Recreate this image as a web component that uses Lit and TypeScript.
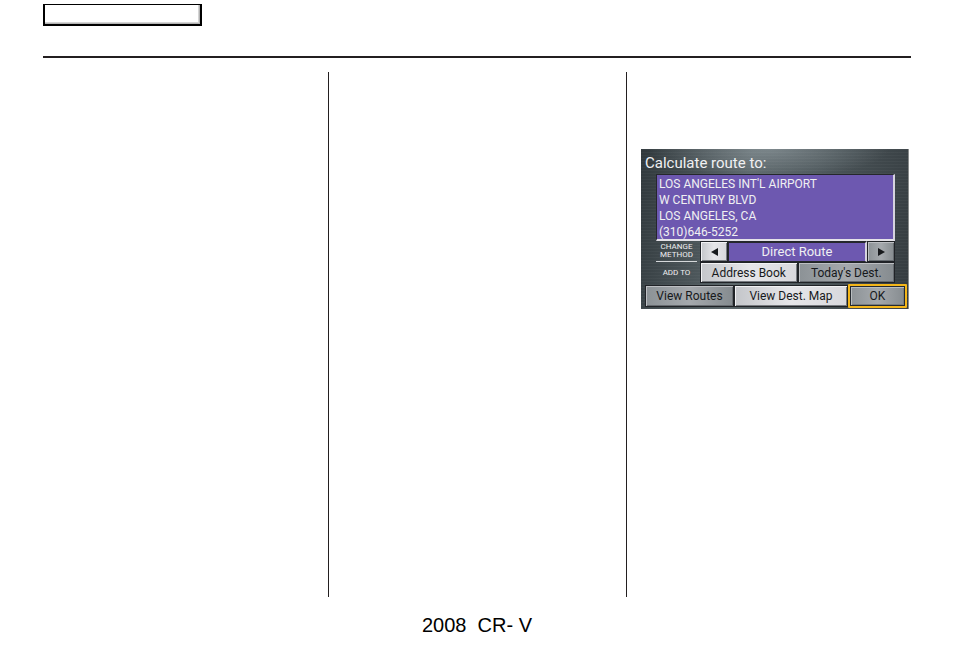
import { LitElement, html, css, svg } from 'lit';
import { customElement, property } from 'lit/decorators.js';

@customElement('route-screen')
export class RouteScreen extends LitElement {
  static styles = css`
    :host {
      display: block;
      box-sizing: border-box;
      padding: 4px 1px 1px 4px;
      border-right: 1px solid #8a8d8d;
      background:
        repeating-linear-gradient(0deg, rgb(255 255 255 / 3%) 0 1px, transparent 1px 3px),
        radial-gradient(ellipse 45% 18% at 48% 0, rgb(190 200 205 / 35%), transparent),
        linear-gradient(100deg, #30383c 0%, #596468 38%, #4c565a 62%, #343b3f 100%);
      color: #f0f0f2;
      font-family: Roboto, 'Liberation Sans', sans-serif;
      font-size: 13px;
    }

    h1 {
      margin: 0;
      font-size: 15px;
      line-height: 21px;
      font-weight: 400;
    }

    .panel {
      margin: 0 12px 0 11px;
    }

    .address {
      box-sizing: border-box;
      height: 67px;
      padding: 1px 2px;
      border: 1px solid #25272c;
      border-right: 2px solid #d6d3df;
      border-bottom: 2px solid #e4e2e8;
      background: #6d58b0;
      font-size: 12px;
      font-style: normal;
      line-height: 16px;
      white-space: nowrap;
    }

    .line {
      display: block;
    }

    .options {
      display: grid;
      grid-template-columns: 41px 1fr;
      column-gap: 3px;
    }

    .label {
      display: flex;
      align-items: center;
      justify-content: center;
      text-align: center;
      font-size: 8px;
      line-height: 8px;
    }

    .label--ruled {
      border-bottom: 1px solid #d5d8da;
    }

    .method {
      display: grid;
      grid-template-columns: 28px 1fr 28px;
      height: 21px;
    }

    .value {
      display: block;
      border: 1px solid #25272c;
      border-top-width: 2px;
      border-right: 2px solid #d6d3df;
      background: #6d58b0;
      line-height: 18px;
      text-align: center;
    }

    .targets {
      display: grid;
      grid-template-columns: 1fr 1fr;
      height: 21px;
    }

    .key {
      display: flex;
      align-items: center;
      justify-content: center;
      box-sizing: border-box;
      min-width: 0;
      padding: 0;
      border: 1px solid #202327;
      background: linear-gradient(90deg, #c4c6ca, #e6e6e9 50%, #d8d8dc);
      box-shadow: inset 1px 1px #f2f2f4, inset -1px -1px #777b80;
      color: #17191c;
      font: inherit;
      font-size: 12px;
      white-space: nowrap;
    }

    .key--dim {
      background: linear-gradient(90deg, #8c9296, #a5a9ad 50%, #858b8f);
      box-shadow: inset 1px 1px #bdbfc3, inset -1px -1px #666b70;
    }

    .key--selected {
      border: 2px solid #f4b61a;
      border-radius: 1px;
      box-shadow: inset 0 0 0 1px #252a30, inset 2px 2px #b9bec1, inset -2px -2px #777d80;
    }

    .key svg {
      width: 7px;
      height: 8px;
      fill: currentColor;
    }

    .actions {
      display: grid;
      grid-template-columns: 89fr 114fr 59fr;
      height: 24px;
      margin-top: 1px;
    }

    .actions .key:not(.key--selected) {
      height: 22px;
      align-self: center;
    }
  `;

  @property({ type: Array }) address: string[] = [
    "LOS ANGELES INT'L AIRPORT",
    'W CENTURY BLVD',
    'LOS ANGELES, CA',
    '(310)646-5252',
  ];
  @property() method = 'Direct Route';

  private _arrow(path: string) {
    return html`<svg viewBox="0 0 7 8" aria-hidden="true">${svg`<path d=${path} />`}</svg>`;
  }

  render() {
    return html`
      <h1>Calculate route to:</h1>
      <div class="panel">
        <address class="address">
          ${this.address.map((line) => html`<span class="line">${line}</span>`)}
        </address>
        <div class="options">
          <div class="label label--ruled" id="method">CHANGE<br />METHOD</div>
          <div class="method" role="group" aria-labelledby="method">
            <button class="key" aria-label="Previous method">${this._arrow('M7 0V8L0 4Z')}</button>
            <output class="value">${this.method}</output>
            <button class="key key--dim" aria-label="Next method">${this._arrow('M0 0V8L7 4Z')}</button>
          </div>
          <div class="label" id="add">ADD TO</div>
          <div class="targets" role="group" aria-labelledby="add">
            <button class="key">Address Book</button>
            <button class="key key--dim">Today's Dest.</button>
          </div>
        </div>
      </div>
      <div class="actions">
        <button class="key key--dim">View Routes</button>
        <button class="key">View Dest. Map</button>
        <button class="key key--dim key--selected">OK</button>
      </div>
    `;
  }
}

@customElement('app-root')
export class AppRoot extends LitElement {
  static styles = css`
    :host {
      display: flex;
      flex-direction: column;
      box-sizing: border-box;
      min-height: 100vh;
      padding: 4px 43px 0;
      background: #fff;
      color: #000;
      font-family: 'Liberation Sans', Arial, sans-serif;
    }

    .contents {
      width: 159px;
      height: 22px;
      padding: 0;
      border: 2px solid #000;
      border-top-width: 1px;
      background: #fff;
      box-shadow: inset -1px -1px #b4b4b4, inset -2px -2px #d4d4d4;
    }

    header {
      padding-bottom: 30px;
      border-bottom: 2px solid #231f20;
      line-height: 0;
    }

    .columns {
      display: grid;
      flex: 1;
      grid-template-columns: 286fr 298fr 284fr;
      margin-top: 14px;
    }

    .column {
      border-right: 1px solid #231f20;
    }

    .column:last-child {
      padding: 77px 2px 0 14px;
      border-right: none;
    }

    footer {
      padding: 17px 0 15px;
      font-size: 20px;
      line-height: 23px;
      text-align: center;
      white-space: pre;
    }
  `;

  render() {
    return html`
      <header><button class="contents" aria-label="Contents"></button></header>
      <main class="columns">
        <section class="column"></section>
        <section class="column"></section>
        <section class="column"><route-screen></route-screen></section>
      </main>
      <footer>2008  CR- V</footer>
    `;
  }
}

declare global {
  interface HTMLElementTagNameMap {
    'app-root': AppRoot;
    'route-screen': RouteScreen;
  }
}
